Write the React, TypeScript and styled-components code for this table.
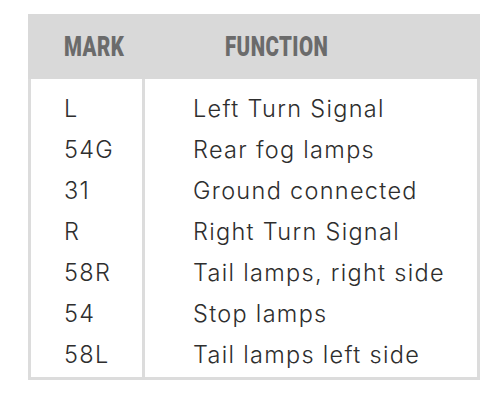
import React from "react";
import styled, { createGlobalStyle } from "styled-components";

const Global = createGlobalStyle`
  html, body { margin: 0; padding: 0; background: #ffffff; }
  body { width: 500px; height: 401px; overflow: hidden; }
`;

const Page = styled.div`
  padding: 14px 20px 0 28px;
`;

const Table = styled.div`
  width: 452px;
  box-sizing: border-box;
  border: 3px solid #dcdcdc;
  border-top: none;
  background: #ffffff;
`;

const HeaderRow = styled.div`
  display: grid;
  grid-template-columns: 114px 1fr;
  height: 65px;
  margin: 0 -3px;
  background: #d9d9d9;
  align-items: center;
`;

const HeaderCell = styled.div<{ $pad: number }>`
  padding-left: ${(p) => p.$pad}px;
  font-family: Roboto, "Liberation Sans", sans-serif;
  font-weight: 900;
  font-size: 28px;
  line-height: 1;
  color: #6b6b6b;
  letter-spacing: 0.6px;
  white-space: nowrap;
`;

const Squeeze = styled.span`
  display: inline-block;
  transform: scaleX(0.73);
  transform-origin: left center;
`;

const Body = styled.div`
  display: grid;
  grid-template-columns: 114px 1fr;
`;

const Cell = styled.div<{ $first?: boolean; $last?: boolean; $mark?: boolean }>`
  font-family: Inter, sans-serif;
  font-weight: 300;
  font-size: 23.5px;
  letter-spacing: 1.3px;
  line-height: 41px;
  color: #2e2e2e;
  white-space: nowrap;
  padding-left: ${(p) => (p.$mark ? 33 : 48)}px;
  padding-top: ${(p) => (p.$first ? 9 : 0)}px;
  padding-bottom: ${(p) => (p.$last ? 2 : 0)}px;
  border-right: ${(p) => (p.$mark ? "3px solid #dcdcdc" : "none")};
`;

const rows: [string, string][] = [
  ["L", "Left Turn Signal"],
  ["54G", "Rear fog lamps"],
  ["31", "Ground connected"],
  ["R", "Right Turn Signal"],
  ["58R", "Tail lamps, right side"],
  ["54", "Stop lamps"],
  ["58L", "Tail lamps left side"],
];

export default function App() {
  return (
    <>
      <Global />
      <Page>
        <Table>
          <HeaderRow>
            <HeaderCell $pad={36}>
              <Squeeze>MARK</Squeeze>
            </HeaderCell>
            <HeaderCell $pad={83}>
              <Squeeze>FUNCTION</Squeeze>
            </HeaderCell>
          </HeaderRow>
          <Body>
            {rows.map(([m, f], i) => (
              <React.Fragment key={m}>
                <Cell $mark $first={i === 0} $last={i === rows.length - 1}>
                  {m}
                </Cell>
                <Cell $first={i === 0} $last={i === rows.length - 1}>
                  {f}
                </Cell>
              </React.Fragment>
            ))}
          </Body>
        </Table>
      </Page>
    </>
  );
}
